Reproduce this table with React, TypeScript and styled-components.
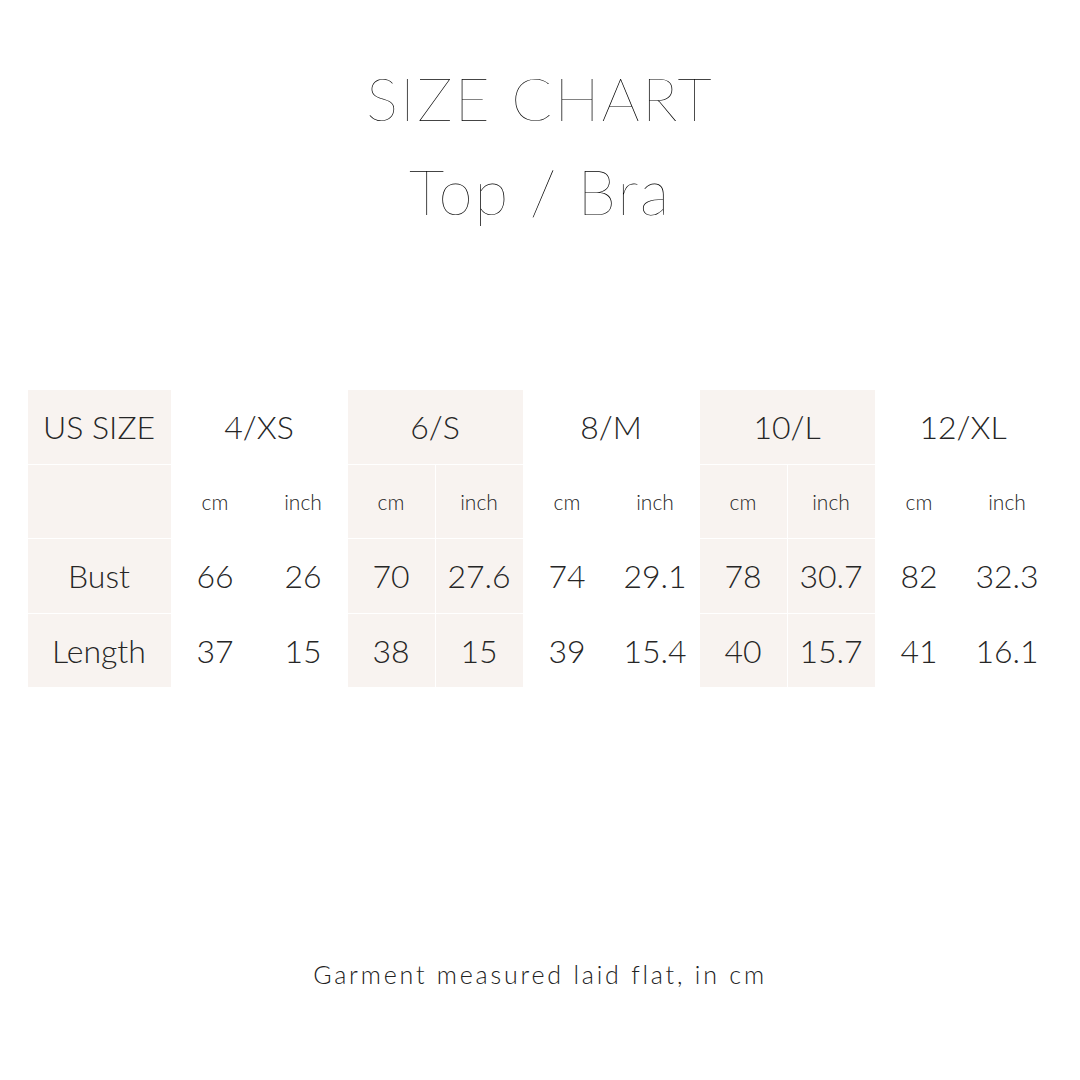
import React from 'react';
import styled, { createGlobalStyle } from 'styled-components';

const GlobalStyle = createGlobalStyle`
  html, body {
    margin: 0;
    padding: 0;
    background: #ffffff;
  }
  body {
    font-family: Lato, "Noto Sans", sans-serif;
    color: #2f2f2f;
  }
`;

const Page = styled.div`
  width: 1080px;
  height: 1080px;
  display: flex;
  flex-direction: column;
  align-items: center;
  box-sizing: border-box;
  padding-top: 68px;
`;

const Title = styled.h1`
  margin: 0;
  font-family: Lato, sans-serif;
  font-weight: 100;
  font-size: 60px;
  line-height: 1;
  letter-spacing: 2.2px;
  color: #000;
`;

const Subtitle = styled.h2`
  margin: 32px 0 0;
  font-family: Lato, sans-serif;
  font-weight: 100;
  font-size: 62px;
  line-height: 1;
  letter-spacing: 2px;
  color: #000;
`;

const Table = styled.div`
  margin-top: 168px;
  margin-left: -2px;
  display: grid;
  grid-template-columns: 143px repeat(10, 87px);
  grid-auto-rows: 73.5px;
  gap: 1px;
`;

const Cell = styled.div<{ $shaded?: boolean; $span?: number; $small?: boolean }>`
  grid-column: span ${(p) => p.$span ?? 1};
  display: flex;
  align-items: center;
  justify-content: center;
  background: ${(p) => (p.$shaded ? '#f8f3f0' : 'transparent')};
  font-family: Lato, sans-serif;
  font-weight: 300;
  font-size: ${(p) => (p.$small ? '21px' : '32px')};
  color: #262626;
  white-space: nowrap;
`;

const Note = styled.p`
  margin: 272px 0 0;
  font-family: Lato, sans-serif;
  font-weight: 300;
  font-size: 25px;
  letter-spacing: 2.8px;
  color: #222;
`;

const sizes = [
  { name: '4/XS', bust: ['66', '26'], length: ['37', '15'] },
  { name: '6/S', bust: ['70', '27.6'], length: ['38', '15'] },
  { name: '8/M', bust: ['74', '29.1'], length: ['39', '15.4'] },
  { name: '10/L', bust: ['78', '30.7'], length: ['40', '15.7'] },
  { name: '12/XL', bust: ['82', '32.3'], length: ['41', '16.1'] },
];

const App: React.FC = () => {
  return (
    <>
      <GlobalStyle />
      <Page>
        <Title>SIZE CHART</Title>
        <Subtitle>Top / Bra</Subtitle>

        <Table>
          <Cell $shaded>US SIZE</Cell>
          {sizes.map((s, i) => (
            <Cell key={s.name} $span={2} $shaded={i % 2 === 1}>{s.name}</Cell>
          ))}

          <Cell $shaded />
          {sizes.map((s, i) => (
            <React.Fragment key={s.name}>
              <Cell $small $shaded={i % 2 === 1}>cm</Cell>
              <Cell $small $shaded={i % 2 === 1}>inch</Cell>
            </React.Fragment>
          ))}

          <Cell $shaded>Bust</Cell>
          {sizes.map((s, i) => (
            <React.Fragment key={s.name}>
              <Cell $shaded={i % 2 === 1}>{s.bust[0]}</Cell>
              <Cell $shaded={i % 2 === 1}>{s.bust[1]}</Cell>
            </React.Fragment>
          ))}

          <Cell $shaded>Length</Cell>
          {sizes.map((s, i) => (
            <React.Fragment key={s.name}>
              <Cell $shaded={i % 2 === 1}>{s.length[0]}</Cell>
              <Cell $shaded={i % 2 === 1}>{s.length[1]}</Cell>
            </React.Fragment>
          ))}
        </Table>

        <Note>Garment measured laid flat, in cm</Note>
      </Page>
    </>
  );
};

export default App;
